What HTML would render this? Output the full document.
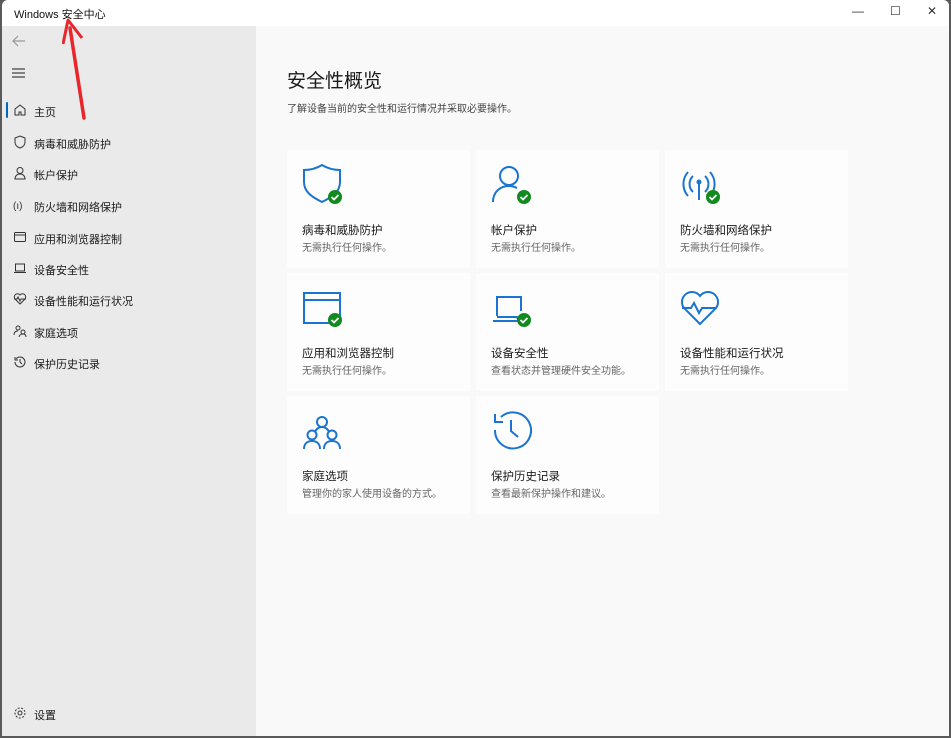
<!DOCTYPE html><html><head><meta charset="utf-8"><style>
*{margin:0;padding:0;box-sizing:border-box}
body{width:951px;height:738px;overflow:hidden;background:#5a5a5a;font-family:"Liberation Sans","Noto Sans CJK SC",sans-serif;position:relative}
.win{position:absolute;left:2px;top:0;width:947px;height:736px;background:#f9f9f9;border-radius:6px 6px 0 0;overflow:hidden}
.title{position:absolute;left:0;top:0;width:100%;height:26px;background:#fff;font-size:11px;color:#111;padding:6px 0 0 12px}
.ctl{position:absolute;top:4px;font-size:12px;color:#333}
.side{position:absolute;left:0;top:26px;width:254px;height:710px;background:#eaeaea}
.nav{position:absolute;left:32px;font-size:11px;color:#1a1a1a}
.ni{position:absolute;left:11px}
.card{position:absolute;width:183px;height:118px;background:#fdfdfd}
.card svg{position:absolute;left:15px;top:14px}
.card .t{position:absolute;left:15px;top:72px;font-size:11.5px;color:#1a1a1a}
.card .s{position:absolute;left:15px;top:89px;font-size:10px;color:#666}
</style></head><body><div class="win">
<div class="title">Windows 安全中心</div>
<div class="ctl" style="left:850px">—</div><div class="ctl" style="left:888px">☐</div><div class="ctl" style="left:925px">✕</div>
<div class="side">
<svg style="position:absolute;left:9px;top:8px" width="16" height="14"><path d="M14 7H2M7 2L2 7l5 5" stroke="#999" fill="none" stroke-width="1.2"/></svg>
<svg style="position:absolute;left:10px;top:42px" width="14" height="10"><path d="M0 1h13M0 5h13M0 9h13" stroke="#444" stroke-width="1.2"/></svg>
<div style="position:absolute;left:4px;top:76px;width:2px;height:16px;background:#0067c0;border-radius:1px"></div>
<div class="nav" style="top:78px">主页</div>
<div class="nav" style="top:110px">病毒和威胁防护</div>
<div class="nav" style="top:141px">帐户保护</div>
<div class="nav" style="top:173px">防火墙和网络保护</div>
<div class="nav" style="top:205px">应用和浏览器控制</div>
<div class="nav" style="top:236px">设备安全性</div>
<div class="nav" style="top:267px">设备性能和运行状况</div>
<div class="nav" style="top:299px">家庭选项</div>
<div class="nav" style="top:330px">保护历史记录</div>
<div class="nav" style="top:681px">设置</div>
<svg class="ni" style="top:77px" width="14" height="14"><path d="M2 6l5-4 5 4v6H8V9H6v3H2z" stroke="#333" fill="none"/></svg>
<svg class="ni" style="top:109px" width="14" height="14"><path d="M7 1l5 2v4c0 3-2 5-5 6-3-1-5-3-5-6V3z" stroke="#333" fill="none"/></svg>
<svg class="ni" style="top:140px" width="14" height="14"><circle cx="7" cy="4.5" r="3" stroke="#333" fill="none"/><path d="M2 13c0-3 2-5 5-5s5 2 5 5z" stroke="#333" fill="none"/></svg>
<svg class="ni" style="top:172px" width="14" height="14"><text x="0" y="11" font-size="10" fill="#333">(ı)</text></svg>
<svg class="ni" style="top:204px" width="14" height="14"><rect x="1.5" y="2.5" width="11" height="9" rx="1" stroke="#333" fill="none"/><path d="M1.5 5h11" stroke="#333"/></svg>
<svg class="ni" style="top:235px" width="14" height="14"><rect x="2.5" y="3" width="9" height="7" stroke="#333" fill="none"/><path d="M1 11.5h12" stroke="#333"/></svg>
<svg class="ni" style="top:266px" width="14" height="14"><path d="M7 12L2 7a3 3 0 015-4 3 3 0 015 4z M1 7h3l1-2 2 4 1-2h5" stroke="#333" fill="none"/></svg>
<svg class="ni" style="top:298px" width="14" height="14"><circle cx="5" cy="4" r="2" stroke="#333" fill="none"/><circle cx="10" cy="8" r="2" stroke="#333" fill="none"/><path d="M1 11c0-3 2-4 4-4M6 13c0-2 2-3 4-3s3 1 3 3" stroke="#333" fill="none"/></svg>
<svg class="ni" style="top:329px" width="14" height="14"><path d="M2 7a5 5 0 105-5 5 5 0 00-4 2M2 2v3h3M7 4v3l2 2" stroke="#333" fill="none"/></svg>
<svg class="ni" style="top:680px" width="14" height="14"><circle cx="7" cy="7" r="2" stroke="#333" fill="none"/><circle cx="7" cy="7" r="5" stroke="#333" fill="none" stroke-dasharray="2 1.5"/></svg>
</div>
<svg style="position:absolute;left:60px;top:14px" width="30" height="110"><path d="M22 104L8 14" stroke="#e8262b" stroke-width="3.5" stroke-linecap="round"/><path d="M1 30L6 6l14 18" stroke="#e8262b" stroke-width="3" fill="none" stroke-linejoin="round"/></svg>
<div style="position:absolute;left:285px;top:66px;font-size:19px;color:#1a1a1a">安全性概览</div>
<div style="position:absolute;left:285px;top:100px;font-size:10px;color:#444">了解设备当前的安全性和运行情况并采取必要操作。</div>

<div class="card" style="left:285px;top:150px"><svg width="50" height="40"><path d="M2 6q10 0 18-5 8 5 18 5v12c0 10-8 15-18 20C10 33 2 28 2 18z" stroke="#1b74d0" stroke-width="2" fill="none"/><circle cx="33" cy="33" r="7" fill="#118a1e"/><path d="M29.5 33l2.5 2.5 4.5-4.5" stroke="#fff" stroke-width="1.8" fill="none"/></svg><div class="t">病毒和威胁防护</div><div class="s">无需执行任何操作。</div></div>
<div class="card" style="left:474px;top:150px"><svg width="50" height="40"><circle cx="18" cy="12" r="9" stroke="#1b74d0" stroke-width="2" fill="none"/><path d="M2 38c0-10 7-16 16-16 3 0 6 1 8 2" stroke="#1b74d0" stroke-width="2" fill="none"/><circle cx="33" cy="33" r="7" fill="#118a1e"/><path d="M29.5 33l2.5 2.5 4.5-4.5" stroke="#fff" stroke-width="1.8" fill="none"/></svg><div class="t">帐户保护</div><div class="s">无需执行任何操作。</div></div>
<div class="card" style="left:663px;top:150px"><svg width="50" height="40"><path d="M8 8a18 18 0 000 24M13 12a11 11 0 000 16M30 8a18 18 0 010 24M25 12a11 11 0 010 16M19 18v18" stroke="#1b74d0" stroke-width="2" fill="none"/><circle cx="19" cy="18" r="2.5" fill="#1b74d0"/><circle cx="33" cy="33" r="7" fill="#118a1e"/><path d="M29.5 33l2.5 2.5 4.5-4.5" stroke="#fff" stroke-width="1.8" fill="none"/></svg><div class="t">防火墙和网络保护</div><div class="s">无需执行任何操作。</div></div>
<div class="card" style="left:285px;top:273px"><svg width="50" height="40"><rect x="2" y="6" width="36" height="30" stroke="#1b74d0" stroke-width="2" fill="none"/><path d="M2 13h36" stroke="#1b74d0" stroke-width="2"/><circle cx="33" cy="33" r="7" fill="#118a1e"/><path d="M29.5 33l2.5 2.5 4.5-4.5" stroke="#fff" stroke-width="1.8" fill="none"/></svg><div class="t">应用和浏览器控制</div><div class="s">无需执行任何操作。</div></div>
<div class="card" style="left:474px;top:273px"><svg width="50" height="40"><path d="M6 29V10h24v14M2 34h26l-2-4H6" stroke="#1b74d0" stroke-width="2" fill="none"/><circle cx="33" cy="33" r="7" fill="#118a1e"/><path d="M29.5 33l2.5 2.5 4.5-4.5" stroke="#fff" stroke-width="1.8" fill="none"/></svg><div class="t">设备安全性</div><div class="s">查看状态并管理硬件安全功能。</div></div>
<div class="card" style="left:663px;top:273px"><svg width="50" height="40"><path d="M20 37L4 21A9 9 0 0120 9a9 9 0 0116 12z" stroke="#1b74d0" stroke-width="2" fill="none"/><path d="M2 21h9l3-5 5 10 3-5h14" stroke="#1b74d0" stroke-width="2" fill="none"/></svg><div class="t">设备性能和运行状况</div><div class="s">无需执行任何操作。</div></div>
<div class="card" style="left:285px;top:396px"><svg width="50" height="40"><circle cx="20" cy="12" r="5" stroke="#1b74d0" stroke-width="2" fill="none"/><circle cx="10" cy="25" r="4.5" stroke="#1b74d0" stroke-width="2" fill="none"/><circle cx="30" cy="25" r="4.5" stroke="#1b74d0" stroke-width="2" fill="none"/><path d="M2 39c0-5 3-8 8-8s8 3 8 8M22 39c0-5 3-8 8-8s8 3 8 8M13 22c1-3 4-5 7-5s6 2 7 5" stroke="#1b74d0" stroke-width="2" fill="none"/></svg><div class="t">家庭选项</div><div class="s">管理你的家人使用设备的方式。</div></div>
<div class="card" style="left:474px;top:396px"><svg width="50" height="40"><path d="M4 20a18 18 0 106-13M4 4v8h8M20 10v11l7 6" stroke="#1b74d0" stroke-width="2" fill="none"/></svg><div class="t">保护历史记录</div><div class="s">查看最新保护操作和建议。</div></div>
</div></body></html>
